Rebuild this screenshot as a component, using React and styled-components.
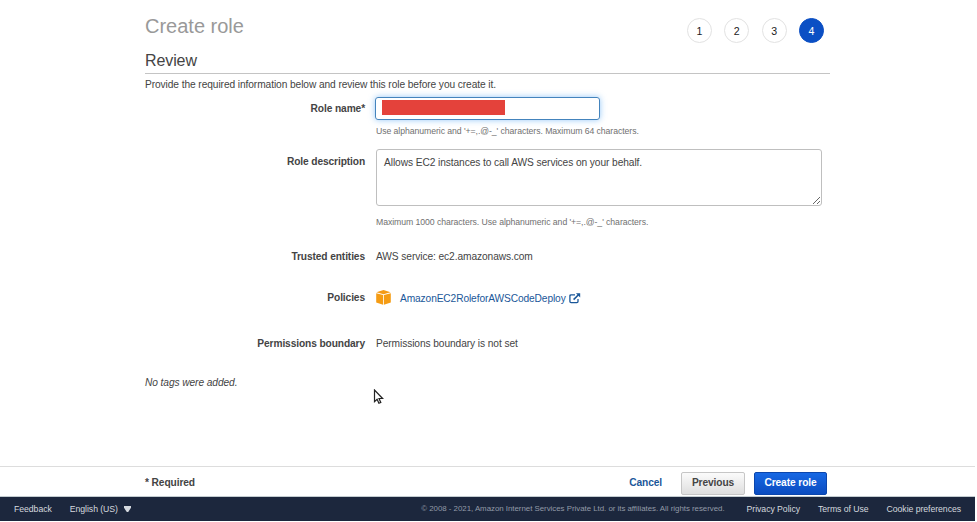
import React from "react";
import styled, { createGlobalStyle } from "styled-components";

const GlobalStyle = createGlobalStyle`
  * { box-sizing: border-box; }
  body {
    margin: 0;
    background: #fff;
    color: #444;
    font: 10.2px/12px "Liberation Sans", Arial, sans-serif;
    letter-spacing: -0.085px;
    overflow: hidden;
  }
`;

const Page = styled.div`
  width: 975px;
  height: 521px;
  display: flex;
  flex-direction: column;
`;

const Main = styled.main`
  flex: 1;
  width: 685px;
  margin-left: 145px;
`;

const Header = styled.header`
  height: 50px;
  display: flex;
  justify-content: space-between;
  padding: 14px 6px 0 0;
`;

const Title = styled.h1`
  margin: 0;
  font-size: 20px;
  line-height: 24px;
  font-weight: 400;
  letter-spacing: 0;
  color: #999;
`;

const Steps = styled.ol`
  display: flex;
  gap: 12.4px;
  margin: 4px 0 0;
  padding: 0;
  list-style: none;
  letter-spacing: 0;
`;

const Step = styled.li`
  width: 25px;
  height: 25px;
  border-radius: 50%;
  border: 1px solid ${(p) => (p.$active ? "#0b4fc4" : "#e2e2e2")};
  background: ${(p) => (p.$active ? "#0b4fc4" : "#fff")};
  color: ${(p) => (p.$active ? "#fff" : "#222")};
  line-height: 24px;
  font-size: 10.6px;
  text-align: center;
`;

const SectionTitle = styled.h2`
  margin: 0;
  height: 24px;
  border-bottom: 1px solid #c4c4c4;
  font-size: 16px;
  line-height: 21px;
  font-weight: 400;
  letter-spacing: -0.1px;
`;

const Intro = styled.p`
  margin: 5px 0 0;
  height: 18px;
`;

const FormRow = styled.div`
  display: grid;
  grid-template-columns: 220px 1fr;
  column-gap: 11px;
  height: ${(p) => p.$height}px;
`;

const Label = styled.label`
  padding-top: ${(p) => p.$top || 0}px;
  font-weight: 700;
  letter-spacing: -0.108px;
  text-align: right;
`;

const NameInput = styled.div`
  width: 225px;
  height: 23px;
  margin-left: -1px;
  padding: 2px 6px;
  border: 1px solid #4484bd;
  border-radius: 3px;
  box-shadow: 0 0 6px rgba(92, 171, 244, 0.65);
`;

const Redaction = styled.div`
  width: 123px;
  height: 15px;
  background: #e4423b;
`;

const Description = styled.textarea`
  display: block;
  width: 446px;
  height: 57px;
  padding: 7px;
  border: 1px solid #bfbfbf;
  border-radius: 3px;
  outline: none;
  color: #444;
  background: #fff;
  font: inherit;
  letter-spacing: inherit;
`;

const Hint = styled.div`
  margin-top: ${(p) => p.$top}px;
  color: #707070;
  font-size: 8.7px;
  line-height: 10px;
  letter-spacing: -0.066px;
  white-space: nowrap;
`;

const Policy = styled.div`
  display: flex;
  align-items: flex-start;
  height: 16px;
`;

const PolicyLink = styled.a`
  display: flex;
  gap: 3.5px;
  margin: 3px 0 0 9px;
  color: #1a5799;
  letter-spacing: -0.114px;
`;

const EmptyTags = styled.p`
  margin: 0;
  font-style: italic;
`;

const Actions = styled.div`
  height: 31px;
  display: flex;
  align-items: center;
  justify-content: space-between;
  padding: 3px 148px 0 145px;
  border-top: 1px solid #ddd;
  border-bottom: 1px solid #c3ccd0;
  font-weight: 700;
  letter-spacing: -0.1px;
`;

const ButtonGroup = styled.div`
  display: flex;
  align-items: center;
  gap: 9px;
`;

const CancelLink = styled.a`
  margin-right: 10px;
  color: #1a5799;
`;

const Button = styled.button`
  width: ${(p) => (p.$primary ? 73 : 64)}px;
  height: 23px;
  padding: 0;
  border: 1px solid ${(p) => (p.$primary ? "#0b46ac" : "#c6c6c6")};
  border-radius: 2px;
  background: ${(p) =>
    p.$primary
      ? "linear-gradient(#1768e4, #0b4cc0)"
      : "linear-gradient(#fbfbfb, #dedede)"};
  color: ${(p) => (p.$primary ? "#fff" : "#444")};
  font: inherit;
  letter-spacing: inherit;
`;

const Footer = styled.footer`
  height: 24px;
  display: flex;
  align-items: center;
  padding: 0 14px;
  background: #1c273d;
  color: #d5d9df;
  font-size: 8.7px;
  letter-spacing: -0.05px;
  white-space: nowrap;
`;

const FooterItem = styled.a`
  display: flex;
  align-items: center;
  gap: 6px;
  margin-left: ${(p) => p.$gap || 0}px;
`;

const Copyright = styled.span`
  margin-left: auto;
  color: #929aa7;
  font-size: 7.9px;
  letter-spacing: -0.03px;
`;

const Cursor = styled.svg`
  position: absolute;
  left: 373px;
  top: 389px;
`;

const PolicyIcon = () => (
  <svg width="15" height="15" viewBox="0 0 15 15">
    <path d="M0.4 2.2 7.5 0l7.1 2.2-7.1 2z" fill="#f49b16" />
    <path d="M0.2 3.2 7.1 5.1v9.6L0.2 12.5zM14.8 3.2 7.9 5.1v9.6l6.9-2.2z" fill="#f59c14" />
  </svg>
);

const ExternalIcon = () => (
  <svg width="12" height="11" viewBox="0 0 12 11" fill="none" stroke="#1a5799" strokeWidth="1.3">
    <path d="M6 1.8H2.1Q.9 1.8.9 2.9v5.7q0 1.1 1.2 1.1h5.8Q9 9.7 9 8.6V6" />
    <path d="M4.6 6.6 9.5 1.8" strokeWidth="1.6" />
    <path d="M6.9.2h4.3v4.3z" fill="#1a5799" stroke="none" />
  </svg>
);

export default function App() {
  return (
    <>
      <GlobalStyle />
      <Page>
        <Main>
          <Header>
            <Title>Create role</Title>
            <Steps>
              {[1, 2, 3, 4].map((n) => (
                <Step key={n} $active={n === 4}>{n}</Step>
              ))}
            </Steps>
          </Header>
          <SectionTitle>Review</SectionTitle>
          <Intro>Provide the required information below and review this role before you create it.</Intro>
          <FormRow $height={52}>
            <Label $top={6}>Role name*</Label>
            <div>
              <NameInput><Redaction /></NameInput>
              <Hint $top={6}>Use alphanumeric and '+=,.@-_' characters. Maximum 64 characters.</Hint>
            </div>
          </FormRow>
          <FormRow $height={102}>
            <Label $top={7}>Role description</Label>
            <div>
              <Description defaultValue="Allows EC2 instances to call AWS services on your behalf." spellCheck={false} />
              <Hint $top={11}>Maximum 1000 characters. Use alphanumeric and '+=,.@-_' characters.</Hint>
            </div>
          </FormRow>
          <FormRow $height={39}>
            <Label>Trusted entities</Label>
            <div>AWS service: ec2.amazonaws.com</div>
          </FormRow>
          <FormRow $height={48}>
            <Label $top={2}>Policies</Label>
            <Policy>
              <PolicyIcon />
              <PolicyLink>AmazonEC2RoleforAWSCodeDeploy <ExternalIcon /></PolicyLink>
            </Policy>
          </FormRow>
          <FormRow $height={39}>
            <Label>Permissions boundary</Label>
            <div>Permissions boundary is not set</div>
          </FormRow>
          <EmptyTags>No tags were added.</EmptyTags>
        </Main>
        <Actions>
          <span>* Required</span>
          <ButtonGroup>
            <CancelLink>Cancel</CancelLink>
            <Button>Previous</Button>
            <Button $primary>Create role</Button>
          </ButtonGroup>
        </Actions>
        <Footer>
          <FooterItem>Feedback</FooterItem>
          <FooterItem $gap={18}>
            English (US)
            <svg width="7" height="6" viewBox="0 0 7 6"><path d="M0 0h7v1.8L4.2 6H2.8L0 1.8z" fill="#d5d9df" /></svg>
          </FooterItem>
          <Copyright>© 2008 - 2021, Amazon Internet Services Private Ltd. or its affiliates. All rights reserved.</Copyright>
          <FooterItem $gap={22}>Privacy Policy</FooterItem>
          <FooterItem $gap={18}>Terms of Use</FooterItem>
          <FooterItem $gap={18}>Cookie preferences</FooterItem>
        </Footer>
      </Page>
      <Cursor width="12" height="16" viewBox="0 0 12 16">
        <path d="M1.5 1v11.6l2.6-2.4 1.8 4.1 1.9-.8L6 9.5h3.6z" fill="#fff" stroke="#222" strokeWidth="1.2" />
      </Cursor>
    </>
  );
}
